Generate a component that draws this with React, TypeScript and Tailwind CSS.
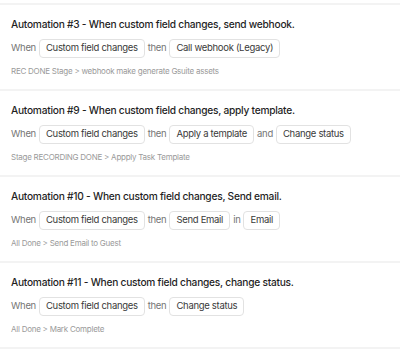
import { memo } from "react";

type Part = { kind: "word" | "chip"; text: string };

interface Automation {
  id: number;
  title: string;
  parts: Part[];
  note: string;
}

const w = (text: string): Part => ({ kind: "word", text });
const c = (text: string): Part => ({ kind: "chip", text });

const AUTOMATIONS: Automation[] = [
  {
    id: 3,
    title: "When custom field changes, send webhook.",
    parts: [w("When"), c("Custom field changes"), w("then"), c("Call webhook (Legacy)")],
    note: "REC DONE Stage > webhook make generate Gsuite assets",
  },
  {
    id: 9,
    title: "When custom field changes, apply template.",
    parts: [
      w("When"),
      c("Custom field changes"),
      w("then"),
      c("Apply a template"),
      w("and"),
      c("Change status"),
    ],
    note: "Stage RECORDING DONE > Appply Task Template",
  },
  {
    id: 10,
    title: "When custom field changes, Send email.",
    parts: [w("When"), c("Custom field changes"), w("then"), c("Send Email"), w("in"), c("Email")],
    note: "All Done > Send Email to Guest",
  },
  {
    id: 11,
    title: "When custom field changes, change status.",
    parts: [w("When"), c("Custom field changes"), w("then"), c("Change status")],
    note: "All Done > Mark Complete",
  },
];

// ─── AutomationRow ───────────────────────────────────────────────────────────

const AutomationRow = memo(function AutomationRow({ item }: { item: Automation }) {
  return (
    <div className="border-t-2 border-[#f3f3f3] pl-[11px] pt-[11px] pb-[12px]">
      <div className="text-[10.2px] leading-[16px] text-[#1f1f1f] font-medium tracking-[-0.25px]">
        Automation #{item.id} - {item.title}
      </div>

      {/* trigger / action chips */}
      <div className="mt-[7px] flex items-center gap-[3px] h-[19px]">
        {item.parts.map((p, i) =>
          p.kind === "chip" ? (
            <span
              key={i}
              className="h-[19px] flex items-center px-[6px] rounded-[4px] border border-[#e2e2e2] text-[9.5px] tracking-[-0.3px] text-[#3a3a3a] bg-white"
            >
              {p.text}
            </span>
          ) : (
            <span key={i} className="text-[9.5px] tracking-[-0.3px] text-[#757575]">
              {p.text}
            </span>
          )
        )}
      </div>

      <div className="mt-[7px] text-[8px] leading-[12px] tracking-[-0.25px] text-[#9a9a9a]">
        {item.note}
      </div>
    </div>
  );
});

export default function App() {
  return (
    <div
      className="w-[400px] h-[349px] bg-white overflow-hidden pt-[3px]"
      style={{ fontFamily: "Inter, 'Noto Sans', sans-serif" }}
    >
      {AUTOMATIONS.map((a) => (
        <AutomationRow key={a.id} item={a} />
      ))}
      <div className="border-t-2 border-[#f3f3f3]" />
    </div>
  );
}
